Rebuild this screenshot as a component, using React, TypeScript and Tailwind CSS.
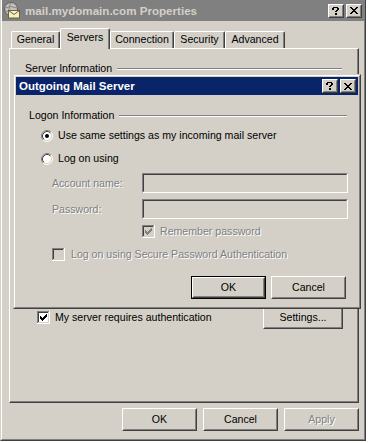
import React from "react";

const FONT = "font-['Liberation_Sans',Arial,sans-serif] text-[10.6px] leading-[13px]";
const DIS = "text-[#808080] [text-shadow:1px_1px_0_#ffffff]";

function Btn({ label, className = "", def = false, disabled = false }: { label: string; className?: string; def?: boolean; disabled?: boolean }) {
  return (
    <div className={`${className} ${def ? "border border-black" : ""} bg-[#d4d0c8]`}>
      <div className="h-full border border-t-white border-l-white border-r-[#404040] border-b-[#404040]">
        <div className="h-full border border-t-[#d4d0c8] border-l-[#d4d0c8] border-r-[#808080] border-b-[#808080] flex items-center justify-center">
          <span className={disabled ? DIS : "text-black"}>{label}</span>
        </div>
      </div>
    </div>
  );
}

function TitleBtn({ kind }: { kind: "help" | "close" }) {
  return (
    <div className="w-[16px] h-[14px] bg-[#d4d0c8] border border-t-white border-l-white border-r-[#404040] border-b-[#404040]">
      <div className="w-full h-full border border-t-[#d4d0c8] border-l-[#d4d0c8] border-r-[#808080] border-b-[#808080] flex items-center justify-center">
        {kind === "help" ? (
          <svg width="8" height="8" viewBox="0 0 8 8" shapeRendering="crispEdges">
            <rect x="1" y="0" width="5" height="1" fill="#000" />
            <rect x="0" y="1" width="2" height="2" fill="#000" />
            <rect x="5" y="1" width="2" height="2" fill="#000" />
            <rect x="4" y="3" width="2" height="1" fill="#000" />
            <rect x="3" y="4" width="2" height="1" fill="#000" />
            <rect x="3" y="6" width="2" height="2" fill="#000" />
          </svg>
        ) : (
          <svg width="8" height="7" viewBox="0 0 8 7" shapeRendering="crispEdges">
            {[0, 1, 2, 3, 4, 5, 6].map((i) => (
              <React.Fragment key={i}>
                <rect x={i} y={i} width="2" height="1" fill="#000" />
                <rect x={6 - i} y={i} width="2" height="1" fill="#000" />
              </React.Fragment>
            ))}
          </svg>
        )}
      </div>
    </div>
  );
}

function Check({ checked, disabled = false }: { checked: boolean; disabled?: boolean }) {
  const c = disabled ? "#808080" : "#000000";
  const rows: [number, number, number][] = [
    [3, 9, 1],
    [4, 8, 2],
    [5, 3, 1],
    [5, 7, 3],
    [6, 3, 2],
    [6, 6, 3],
    [7, 3, 5],
    [8, 4, 3],
    [9, 5, 1],
  ];
  return (
    <svg width="13" height="13" viewBox="0 0 13 13" shapeRendering="crispEdges" className="shrink-0">
      <rect x="0" y="0" width="13" height="13" fill="#ffffff" />
      <rect x="0" y="0" width="12" height="12" fill="#808080" />
      <rect x="1" y="1" width="11" height="11" fill="#d4d0c8" />
      <rect x="1" y="1" width="10" height="10" fill="#404040" />
      <rect x="2" y="2" width="9" height="9" fill={disabled ? "#d4d0c8" : "#ffffff"} />
      {checked && rows.map(([y, x, w], i) => <rect key={i} x={x} y={y} width={w} height="1" fill={c} />)}
    </svg>
  );
}

function Radio({ checked }: { checked: boolean }) {
  return (
    <svg width="12" height="12" viewBox="0 0 12 12" className="shrink-0">
      <circle cx="6" cy="6" r="5" fill="#ffffff" />
      <path d="M2.11 9.89 A5.5 5.5 0 0 0 9.89 2.11" fill="none" stroke="#ffffff" strokeWidth="1" />
      <path d="M2.82 9.18 A4.5 4.5 0 0 0 9.18 2.82" fill="none" stroke="#d4d0c8" strokeWidth="1" />
      <path d="M2.11 9.89 A5.5 5.5 0 0 1 9.89 2.11" fill="none" stroke="#808080" strokeWidth="1" />
      <path d="M2.82 9.18 A4.5 4.5 0 0 1 9.18 2.82" fill="none" stroke="#404040" strokeWidth="1" />
      {checked && <circle cx="6" cy="6" r="2" fill="#000000" />}
    </svg>
  );
}

function Sunken({ className = "" }: { className?: string }) {
  return (
    <div className={`${className} border border-t-[#808080] border-l-[#808080] border-r-white border-b-white`}>
      <div className="h-full border border-t-[#404040] border-l-[#404040] border-r-[#d4d0c8] border-b-[#d4d0c8] bg-[#d4d0c8]" />
    </div>
  );
}

function GroupHead({ label, className = "" }: { label: string; className?: string }) {
  return (
    <div className={`flex items-center h-[13px] ${className}`}>
      <span className="whitespace-nowrap">{label}</span>
      <div className="flex-1 ml-[5px] h-[2px] border-t border-t-[#808080] border-b border-b-white" />
    </div>
  );
}

function MailIcon() {
  return (
    <svg width="18" height="17" viewBox="0 0 18 17" className="shrink-0">
      <circle cx="8" cy="7" r="6.5" fill="#c0c0c0" stroke="#606060" strokeWidth="1" />
      <path d="M2 6 Q8 3 14 6 M2 9 Q8 11 14 9 M8 0.5 Q4 7 8 13.5" fill="none" stroke="#7a7a7a" strokeWidth="0.8" />
      <rect x="5.5" y="8.5" width="11" height="7.5" fill="#f6efc0" stroke="#6b6040" strokeWidth="1" />
      <path d="M5.5 8.5 L11 12.5 L16.5 8.5" fill="none" stroke="#6b6040" strokeWidth="1" />
    </svg>
  );
}

function Tab({ label, w, selected = false }: { label: string; w: string; selected?: boolean }) {
  return (
    <div
      className={`${w} ${
        selected ? "h-[21px] mb-[-1px] relative z-10" : "h-[17px]"
      } bg-[#d4d0c8] border-t border-l border-r border-t-white border-l-white border-r-[#404040] rounded-tl-[2px] rounded-tr-[2px] shadow-[inset_-1px_0_0_#808080] flex items-center justify-center`}
    >
      <span className={selected ? "mb-[3px]" : "mb-[1px]"}>{label}</span>
    </div>
  );
}

export default function App() {
  return (
    <div className={`${FONT} w-[368px] h-[443px] bg-white relative overflow-hidden text-black`}>
      <div className="w-[366px] h-[441px] bg-[#d4d0c8] border-l border-r border-b border-l-[#d4d0c8] border-r-[#404040] border-b-[#404040]">
        <div className="h-full border-l border-r border-b border-l-white border-r-[#808080] border-b-[#808080] flex flex-col">
          {/* title bar */}
          <div className="h-[21px] bg-[#808080] flex items-center pl-[1px] pr-[2px]">
            <MailIcon />
            <span className="ml-[4px] font-bold text-[11.6px] text-[#d4d0c8] whitespace-nowrap">mail.mydomain.com Properties</span>
            <div className="ml-auto flex gap-[2px]">
              <TitleBtn kind="help" />
              <TitleBtn kind="close" />
            </div>
          </div>

          {/* tabs */}
          <div className="mt-[7px] h-[20px] flex items-end pl-[9px]">
            <Tab label="General" w="w-[49px]" />
            <Tab label="Servers" w="w-[50px]" selected />
            <Tab label="Connection" w="w-[64px]" />
            <Tab label="Security" w="w-[51px]" />
            <Tab label="Advanced" w="w-[60px]" />
          </div>

          {/* panel */}
          <div className="ml-[7px] w-[350px] h-[355px] border border-t-white border-l-white border-r-[#404040] border-b-[#404040] shadow-[inset_-1px_-1px_0_#808080] flex flex-col">
            <GroupHead label="Server Information" className="mt-[13px] ml-[15px] mr-[16px]" />
            <div className="mt-[231px] h-[23px] flex items-center pl-[27px] pr-[15px]">
              <Check checked />
              <span className="ml-[5px]">My server requires authentication</span>
              <Btn label="Settings..." className="ml-auto w-[80px] h-[23px]" />
            </div>
          </div>

          {/* bottom buttons */}
          <div className="mt-[5px] flex justify-end gap-[6px] pr-[5px]">
            <Btn label="OK" className="w-[75px] h-[23px]" />
            <Btn label="Cancel" className="w-[75px] h-[23px]" />
            <Btn label="Apply" className="w-[75px] h-[23px]" disabled />
          </div>
        </div>
      </div>

      {/* Outgoing Mail Server dialog (floating window) */}
      <div className="absolute left-[13px] top-[74px] w-[348px] h-[235px] bg-[#d4d0c8] border border-t-[#d4d0c8] border-l-[#d4d0c8] border-r-[#404040] border-b-[#404040]">
        <div className="h-full border border-t-white border-l-white border-r-[#808080] border-b-[#808080] p-[1px] flex flex-col">
          <div className="h-[18px] bg-[#0a246a] flex items-center pl-[3px] pr-[2px]">
            <span className="font-bold text-[11.5px] text-white whitespace-nowrap">Outgoing Mail Server</span>
            <div className="ml-auto flex gap-[2px]">
              <TitleBtn kind="help" />
              <TitleBtn kind="close" />
            </div>
          </div>

          <GroupHead label="Logon Information" className="mt-[14px] ml-[13px] mr-[11px]" />

          <div className="mt-[7px] h-[13px] flex items-center pl-[25px]">
            <Radio checked />
            <span className="ml-[5px] whitespace-nowrap">Use same settings as my incoming mail server</span>
          </div>
          <div className="mt-[10px] h-[13px] flex items-center pl-[25px]">
            <Radio checked={false} />
            <span className="ml-[5px]">Log on using</span>
          </div>

          <div className="mt-[8px] h-[20px] flex items-center pl-[36px]">
            <span className={`w-[90px] ${DIS}`}>Account name:</span>
            <Sunken className="w-[206px] h-[20px]" />
          </div>
          <div className="mt-[6px] h-[20px] flex items-center pl-[36px]">
            <span className={`w-[90px] ${DIS}`}>Password:</span>
            <Sunken className="w-[206px] h-[20px]" />
          </div>

          <div className="mt-[6px] h-[13px] flex items-center pl-[126px]">
            <Check checked disabled />
            <span className={`ml-[5px] ${DIS}`}>Remember password</span>
          </div>
          <div className="mt-[10px] h-[13px] flex items-center pl-[36px]">
            <Check checked={false} disabled />
            <span className={`ml-[6px] ${DIS}`}>Log on using Secure Password Authentication</span>
          </div>

          <div className="mt-[15px] flex justify-end gap-[5px] pr-[12px]">
            <Btn label="OK" className="w-[75px] h-[23px]" def />
            <Btn label="Cancel" className="w-[75px] h-[23px]" />
          </div>
        </div>
      </div>
    </div>
  );
}
